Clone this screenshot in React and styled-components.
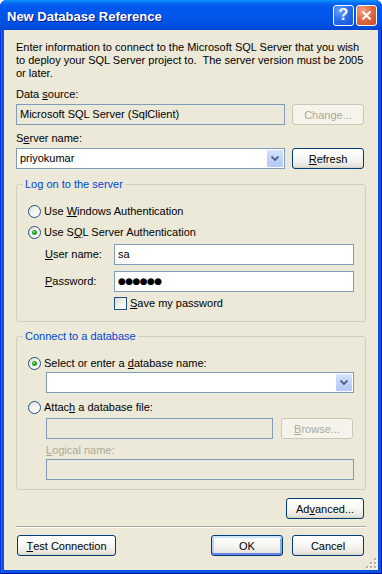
import React from 'react';
import styled, { createGlobalStyle } from 'styled-components';

const GlobalStyle = createGlobalStyle`
  html, body { margin:0; padding:0; background:#fff; }
  body { font-family:"Liberation Sans", Arial, sans-serif; font-size:11px; color:#000; }
`;

const Window = styled.div`
  width:382px;
  height:574px;
  box-sizing:border-box;
  display:flex;
  flex-direction:column;
  padding:0 4px 4px;
  background:#0A53E4;
  border-radius:7px 7px 0 0;
  box-shadow:inset 1px 0 #0831D9, inset -1px 0 #00138C, inset 0 -1px #00138C, inset 2px 0 #166AEE;
  overflow:hidden;
`;

const TitleBar = styled.div`
  height:30px;
  margin:0 -4px;
  padding:0 5px 0 7px;
  box-sizing:border-box;
  display:flex;
  align-items:center;
  background:linear-gradient(180deg,#0997FF 0%,#0A6BF4 10%,#0058EE 22%,#0055EA 55%,#0052E4 80%,#0046D0 100%);
`;

const Title = styled.div`
  flex:1;
  color:#fff;
  font-weight:bold;
  font-size:13px;
  padding-top:2px;
  text-shadow:1px 1px 0 #0A1883;
`;

const CaptionButton = styled.div`
  width:21px;
  height:21px;
  box-sizing:border-box;
  margin-left:2px;
  border:1px solid #fff;
  border-radius:3px;
  display:flex;
  align-items:center;
  justify-content:center;
  color:#fff;
  font-weight:bold;
  font-size:16px;
  background:${p => p.close
    ? 'radial-gradient(circle at 30% 25%, #F4A184 0%, #E26A45 45%, #CB4A22 100%)'
    : 'radial-gradient(circle at 30% 25%, #6FA2FA 0%, #2E6FF0 45%, #1451D9 100%)'};
`;

const Client = styled.div`
  position:relative;
  flex:1;
  display:flex;
  flex-direction:column;
  padding:11px 12px 0;
  background:#ECE9D8;
`;

const Intro = styled.p`
  margin:0;
  line-height:13px;
  white-space:pre;
`;

const Label = styled.div`
  margin-top:${p => p.top || 0}px;
  line-height:13px;
  color:${p => (p.disabled ? '#ACA899' : '#000')};
`;

const Row = styled.div`
  display:flex;
  align-items:center;
  gap:${p => p.gap ?? 7}px;
  margin-top:${p => p.top || 0}px;
  margin-left:${p => p.indent || 0}px;
`;

const TextBox = styled.div`
  position:relative;
  width:${p => p.w}px;
  height:21px;
  box-sizing:border-box;
  border:1px solid #7F9DB9;
  padding:0 3px;
  line-height:19px;
  background:${p => (p.disabled ? '#ECE9D8' : '#fff')};
  display:flex;
  align-items:center;
`;

const DropArrow = styled.div`
  position:absolute;
  right:1px;
  top:1px;
  width:16px;
  height:17px;
  border-radius:1px;
  background:linear-gradient(180deg,#D6E3FD 0%,#C1D3FB 50%,#B3C8F7 100%);
  display:flex;
  align-items:center;
  justify-content:center;
`;

const Button = styled.div`
  width:${p => p.w}px;
  height:21px;
  box-sizing:border-box;
  margin-right:${p => p.mr || 0}px;
  margin-left:${p => p.ml || 0}px;
  border:1px solid ${p => (p.disabled ? '#C9C7BA' : '#003C74')};
  border-radius:3px;
  display:flex;
  align-items:center;
  justify-content:center;
  color:${p => (p.disabled ? '#ACA899' : '#000')};
  background:${p => (p.disabled
    ? '#F5F4EA'
    : 'linear-gradient(180deg,#FFFFFF 0%,#FAFAF8 35%,#F0EFEA 70%,#E5E3DA 90%,#D6D0C5 100%)')};
  box-shadow:${p => (p.primary
    ? 'inset 0 2px 0 #CEE7FF, inset 0 -2px 0 #6982EE, inset 2px 0 0 #B8D2F8, inset -2px 0 0 #89ADE4'
    : 'none')};
`;

const Group = styled.fieldset`
  margin:${p => p.top}px 0 0;
  padding:14px 11px ${p => p.bottom}px;
  border:1px solid #D0D0BF;
  border-radius:3px;
  min-width:0;
`;

const Legend = styled.legend`
  margin-left:-5px;
  padding:0 2px;
  line-height:13px;
  color:#0046D5;
`;

const Choice = styled.div`
  display:flex;
  align-items:center;
  gap:3px;
  height:13px;
  line-height:13px;
  margin-top:${p => p.top || 0}px;
  margin-left:${p => p.indent || 0}px;
`;

const FieldLabel = styled.div`
  width:69px;
  padding-left:17px;
  line-height:13px;
`;

const Password = styled.span`
  font-family:"DejaVu Sans", sans-serif;
  font-size:9px;
  letter-spacing:-0.6px;
`;

const Separator = styled.div`
  margin-top:7px;
  height:1px;
  background:#ACA899;
  border-bottom:1px solid #fff;
`;

const Footer = styled.div`
  display:flex;
  margin-top:7px;
  gap:9px;
`;

const Spacer = styled.div`
  flex:1;
`;

const Grip = styled.svg`
  position:absolute;
  right:1px;
  bottom:1px;
`;

const U = styled.span`
  text-decoration:underline;
  text-underline-offset:1px;
`;

const Radio = ({ checked }) => (
  <svg width="13" height="13" viewBox="0 0 13 13">
    <defs>
      <linearGradient id="rg" x1="0" y1="0" x2="1" y2="1">
        <stop offset="0" stopColor="#DCD9CB" />
        <stop offset="0.5" stopColor="#F6F6F2" />
        <stop offset="1" stopColor="#FFFFFF" />
      </linearGradient>
    </defs>
    <circle cx="6.5" cy="6.5" r="6" fill="url(#rg)" stroke="#1C5180" />
    {checked && <circle cx="6.5" cy="6.5" r="2.5" fill="#21A121" />}
    {checked && <circle cx="6" cy="6" r="1" fill="#8FE58B" />}
  </svg>
);

const CheckBox = () => (
  <svg width="13" height="13" viewBox="0 0 13 13">
    <defs>
      <linearGradient id="cg" x1="0" y1="0" x2="1" y2="1">
        <stop offset="0" stopColor="#DCD9CB" />
        <stop offset="0.6" stopColor="#F6F6F2" />
        <stop offset="1" stopColor="#FFFFFF" />
      </linearGradient>
    </defs>
    <rect x="0.5" y="0.5" width="12" height="12" fill="url(#cg)" stroke="#1C5180" />
  </svg>
);

const Chevron = () => (
  <svg width="8" height="5" viewBox="0 0 8 5">
    <path d="M0.5 0.5 L4 4 L7.5 0.5" fill="none" stroke="#4D6185" strokeWidth="1.8" />
  </svg>
);

const Combo = ({ w, children }) => (
  <TextBox w={w}>
    {children}
    <DropArrow><Chevron /></DropArrow>
  </TextBox>
);

export default function App() {
  return (
    <Window>
      <GlobalStyle />
      <TitleBar>
        <Title>New Database Reference</Title>
        <CaptionButton>?</CaptionButton>
        <CaptionButton close>
          <svg width="11" height="11" viewBox="0 0 11 11">
            <path d="M1.5 1.5 L9.5 9.5 M9.5 1.5 L1.5 9.5" stroke="#fff" strokeWidth="2.2" />
          </svg>
        </CaptionButton>
      </TitleBar>
      <Client>
        <Intro>
          {'Enter information to connect to the Microsoft SQL Server that you wish\nto deploy your SQL Server project to.  The server version must be 2005\nor later.'}
        </Intro>
        <Label top={8}>Data <U>s</U>ource:</Label>
        <Row top={3}>
          <TextBox w={269} disabled>Microsoft SQL Server (SqlClient)</TextBox>
          <Button w={72} disabled>Change...</Button>
        </Row>
        <Label top={7}>S<U>e</U>rver name:</Label>
        <Row top={3}>
          <Combo w={269}>priyokumar</Combo>
          <Button w={72}><U>R</U>efresh</Button>
        </Row>

        <Group top={9} bottom={11}>
          <Legend>Log on to the server</Legend>
          <Choice><Radio /><span>Use <U>W</U>indows Authentication</span></Choice>
          <Choice top={8}><Radio checked /><span>Use S<U>Q</U>L Server Authentication</span></Choice>
          <Row top={5} gap={0}>
            <FieldLabel><U>U</U>ser name:</FieldLabel>
            <TextBox w={240}>sa</TextBox>
          </Row>
          <Row top={6} gap={0}>
            <FieldLabel><U>P</U>assword:</FieldLabel>
            <TextBox w={240}><Password>●●●●●●</Password></TextBox>
          </Row>
          <Choice top={5} indent={86}><CheckBox /><span><U>S</U>ave my password</span></Choice>
        </Group>

        <Group top={8} bottom={9}>
          <Legend>Connect to a database</Legend>
          <Choice><Radio checked /><span>Select or enter a <U>d</U>atabase name:</span></Choice>
          <Row top={2} indent={18}>
            <Combo w={308} />
          </Row>
          <Choice top={8}><Radio /><span>Attac<U>h</U> a database file:</span></Choice>
          <Row top={4} indent={18} gap={8}>
            <TextBox w={227} disabled />
            <Button w={72} disabled><U>B</U>rowse...</Button>
          </Row>
          <Row top={5} indent={18}>
            <Label disabled><U>L</U>ogical name:</Label>
          </Row>
          <Row top={2} indent={18}>
            <TextBox w={308} disabled />
          </Row>
        </Group>

        <Row top={8}>
          <Spacer />
          <Button w={78} mr={2}>Ad<U>v</U>anced...</Button>
        </Row>
        <Separator />
        <Footer>
          <Button w={99} ml={1}><U>T</U>est Connection</Button>
          <Spacer />
          <Button w={72} primary>OK</Button>
          <Button w={72} mr={2}>Cancel</Button>
        </Footer>
        <Grip width="12" height="12" viewBox="0 0 12 12">
          {[[9, 1], [9, 5], [5, 5], [9, 9], [5, 9], [1, 9]].map(([x, y]) => (
            <g key={`${x}-${y}`}>
              <rect x={x + 1} y={y + 1} width="2" height="2" fill="#fff" />
              <rect x={x} y={y} width="2" height="2" fill="#B8B4A2" />
            </g>
          ))}
        </Grip>
      </Client>
    </Window>
  );
}
